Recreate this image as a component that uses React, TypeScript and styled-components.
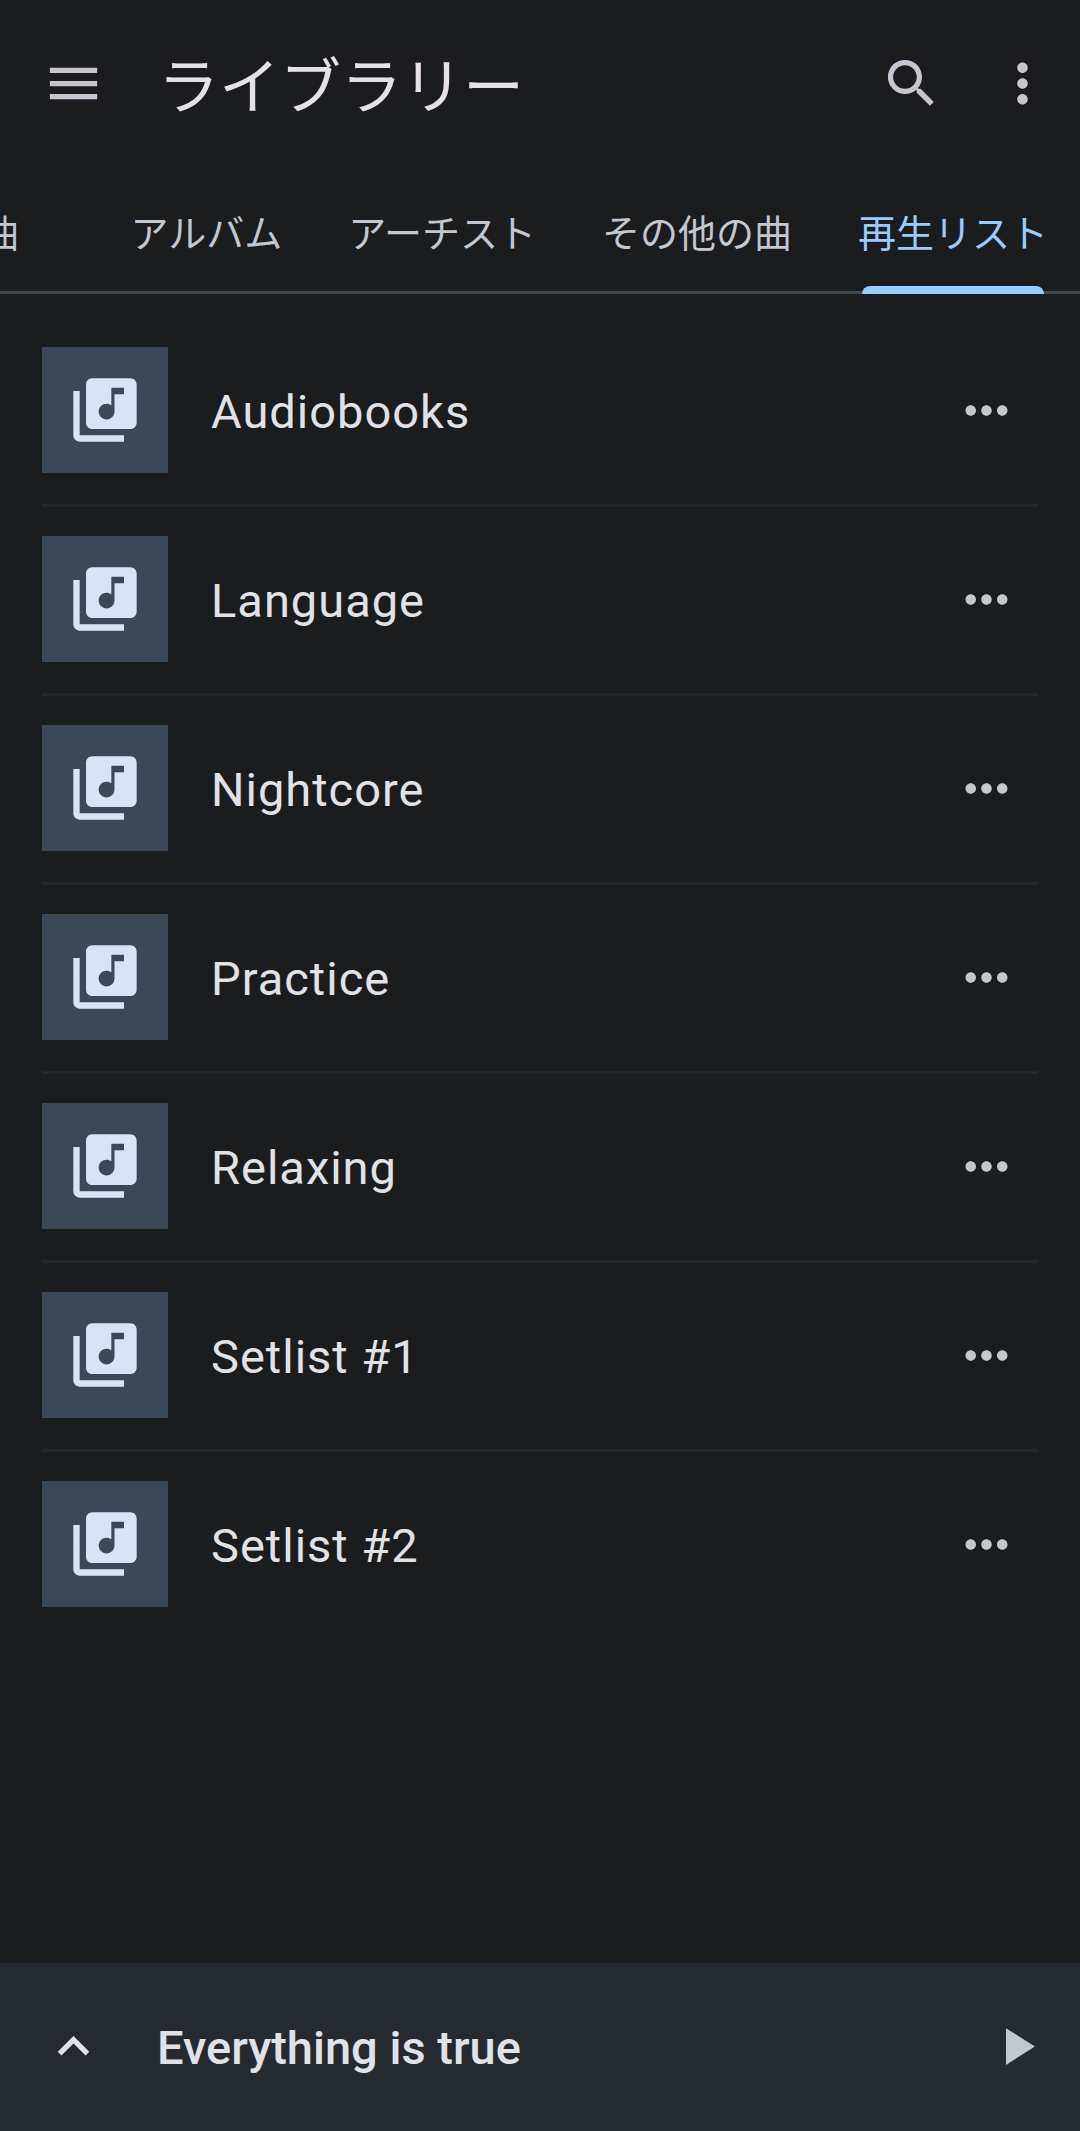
import React, { useState } from "react";
import styled, { createGlobalStyle } from "styled-components";

const color = {
  background: "#1a1c1e",
  bar: "#252a31",
  text: "#e2e2e6",
  title: "#e6e1e5",
  toolbarIcon: "#cac4d0",
  muted: "#c3c7cf",
  accent: "#99cbff",
  outline: "#42474e",
  divider: "#242629",
  tile: "#3b4858",
  tileIcon: "#d6e4f7",
};

const GlobalStyle = createGlobalStyle`
  *, *::before, *::after { box-sizing: border-box; }
  body {
    margin: 0;
    background: ${color.background};
    color: ${color.text};
    font-family: Roboto, "Noto Sans CJK JP", sans-serif;
  }
`;

const Screen = styled.div`
  display: flex;
  flex-direction: column;
  min-height: 100vh;
`;

const Toolbar = styled.header`
  display: flex;
  align-items: center;
  height: 168px;
  padding: 0 26px 2px 42px;
`;

const Title = styled.h1`
  flex: 1;
  margin: 0 0 0 53px;
  color: ${color.title};
  font-family: "Noto Sans CJK JP", sans-serif;
  font-size: 61px;
  font-weight: 400;
  line-height: 84px;
`;

const ToolbarActions = styled.div`
  display: flex;
  gap: 48px;
`;

const IconButton = styled.button<{ $color: string }>`
  display: flex;
  flex: none;
  padding: 0;
  border: 0;
  background: none;
  color: ${(p) => p.$color};
  cursor: pointer;
`;

const Glyph = styled.svg<{ $size: number }>`
  display: block;
  width: ${(p) => p.$size}px;
  height: ${(p) => p.$size}px;
  fill: currentColor;
`;

const TabBar = styled.nav`
  display: flex;
  justify-content: flex-end;
  gap: 2px;
  height: 126px;
  overflow: hidden;
  box-shadow: inset 0 -3px ${color.outline};
`;

const Tab = styled.button<{ $active: boolean }>`
  position: relative;
  flex: none;
  min-width: 192px;
  height: 126px;
  padding: 0 32px;
  border: 0;
  background: none;
  color: ${(p) => (p.$active ? color.accent : color.muted)};
  font-family: "Noto Sans CJK JP", sans-serif;
  font-size: 38px;
  line-height: 56px;
  white-space: nowrap;
  cursor: pointer;
`;

const Indicator = styled.span`
  position: absolute;
  right: 36px;
  bottom: 0;
  left: 36px;
  height: 8px;
  border-radius: 8px 8px 0 0;
  background: ${color.accent};
`;

const List = styled.ul`
  flex: 1;
  margin: 0;
  padding: 24px 42px;
  list-style: none;
`;

const Row = styled.li`
  display: flex;
  align-items: center;
  padding: 29px 20px 31px 0;

  & + & {
    border-top: 3px solid ${color.divider};
  }
`;

const Tile = styled.span`
  display: flex;
  flex: none;
  align-items: center;
  justify-content: center;
  width: 126px;
  height: 126px;
  background: ${color.tile};
  color: ${color.tileIcon};
`;

const RowLink = styled.a`
  display: flex;
  flex: 1;
  align-items: center;
  gap: 43px;
  min-width: 0;
  color: ${color.text};
  text-decoration: none;
`;

const Name = styled.span`
  padding-top: 4px;
  font-size: 47px;
  letter-spacing: 1px;
  line-height: 64px;
`;

const Player = styled.footer`
  display: flex;
  align-items: center;
  height: 168px;
  padding: 0 32px 2px 42px;
  background: ${color.bar};
`;

const TrackName = styled.p`
  flex: 1;
  margin: 0 0 0 52px;
  padding-top: 4px;
  font-size: 47px;
  font-weight: 500;
  line-height: 64px;
`;

const paths = {
  menu: "M3 18h18v-2H3v2zm0-5h18v-2H3v2zm0-7v2h18V6H3z",
  search:
    "M15.5 14h-.79l-.28-.27A6.471 6.471 0 0 0 16 9.5 6.5 6.5 0 1 0 9.5 16c1.61 0 3.09-.59 4.23-1.57l.27.28v.79l5 4.99L20.49 19l-4.99-5zm-6 0C7.01 14 5 11.99 5 9.5S7.01 5 9.5 5 14 7.01 14 9.5 11.99 14 9.5 14z",
  moreVertical:
    "M12 8c1.1 0 2-.9 2-2s-.9-2-2-2-2 .9-2 2 .9 2 2 2zm0 2c-1.1 0-2 .9-2 2s.9 2 2 2 2-.9 2-2-.9-2-2-2zm0 6c-1.1 0-2 .9-2 2s.9 2 2 2 2-.9 2-2-.9-2-2-2z",
  more: "M6 10c-1.1 0-2 .9-2 2s.9 2 2 2 2-.9 2-2-.9-2-2-2zm12 0c-1.1 0-2 .9-2 2s.9 2 2 2 2-.9 2-2-.9-2-2-2zm-6 0c-1.1 0-2 .9-2 2s.9 2 2 2 2-.9 2-2-.9-2-2-2z",
  library:
    "M20 2H8c-1.1 0-2 .9-2 2v12c0 1.1.9 2 2 2h12c1.1 0 2-.9 2-2V4c0-1.1-.9-2-2-2zm-2 5h-3v5.5c0 1.38-1.12 2.5-2.5 2.5S10 13.88 10 12.5s1.12-2.5 2.5-2.5c.57 0 1.08.19 1.5.51V5h4v2zM4 6H2v14c0 1.1.9 2 2 2h14v-2H4V6z",
  expand: "M12 8l-6 6 1.41 1.41L12 10.83l4.59 4.58L18 14z",
  play: "M8 5v14l11-7z",
};

function Icon({ name, size = 63 }: { name: keyof typeof paths; size?: number }) {
  return (
    <Glyph $size={size} viewBox="0 0 24 24" aria-hidden="true">
      <path d={paths[name]} />
    </Glyph>
  );
}

const tabs = ["曲", "アルバム", "アーチスト", "その他の曲", "再生リスト"];

const playlists = [
  "Audiobooks",
  "Language",
  "Nightcore",
  "Practice",
  "Relaxing",
  "Setlist #1",
  "Setlist #2",
];

export default function App() {
  const [active, setActive] = useState("再生リスト");

  return (
    <Screen lang="ja">
      <GlobalStyle />
      <Toolbar>
        <IconButton $color={color.toolbarIcon} aria-label="メニュー">
          <Icon name="menu" />
        </IconButton>
        <Title>ライブラリー</Title>
        <ToolbarActions>
          <IconButton $color={color.toolbarIcon} aria-label="検索">
            <Icon name="search" />
          </IconButton>
          <IconButton $color={color.toolbarIcon} aria-label="その他">
            <Icon name="moreVertical" />
          </IconButton>
        </ToolbarActions>
      </Toolbar>
      <TabBar role="tablist">
        {tabs.map((tab) => (
          <Tab
            key={tab}
            role="tab"
            aria-selected={tab === active}
            $active={tab === active}
            onClick={() => setActive(tab)}
          >
            {tab}
            {tab === active && <Indicator />}
          </Tab>
        ))}
      </TabBar>
      <List>
        {playlists.map((name) => (
          <Row key={name}>
            <RowLink href="#">
              <Tile>
                <Icon name="library" size={76} />
              </Tile>
              <Name>{name}</Name>
            </RowLink>
            <IconButton $color={color.muted} aria-label={`${name} のオプション`}>
              <Icon name="more" />
            </IconButton>
          </Row>
        ))}
      </List>
      <Player>
        <IconButton $color={color.text} aria-label="展開">
          <Icon name="expand" />
        </IconButton>
        <TrackName>Everything is true</TrackName>
        <IconButton $color={color.muted} aria-label="再生">
          <Icon name="play" />
        </IconButton>
      </Player>
    </Screen>
  );
}
